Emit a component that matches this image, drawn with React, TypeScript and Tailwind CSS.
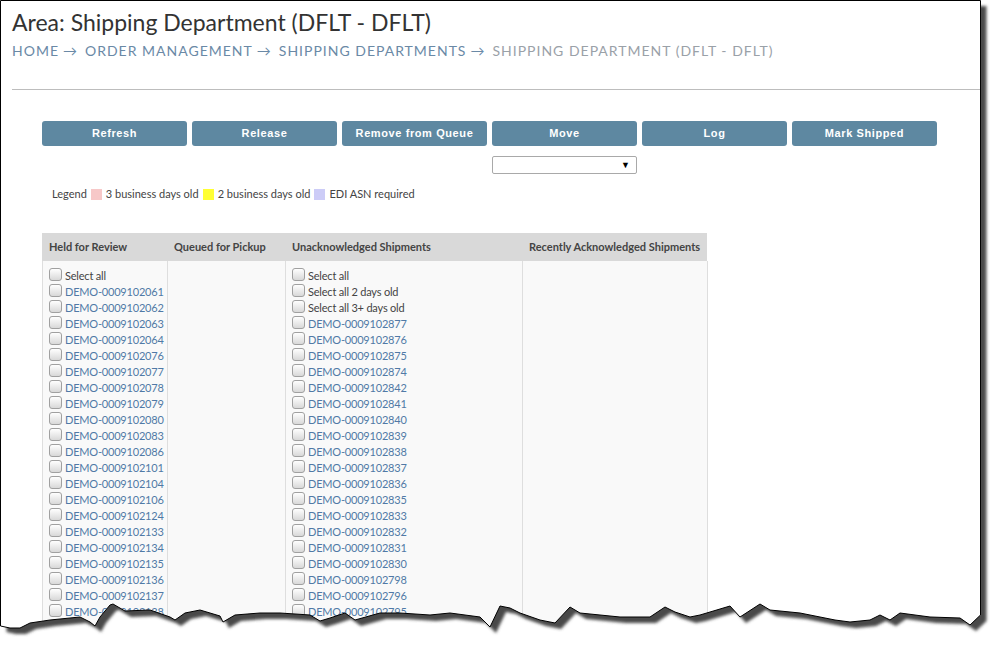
import React from "react";

const held = [
  "0009102061","0009102062","0009102063","0009102064","0009102076","0009102077","0009102078","0009102079","0009102080","0009102083","0009102086","0009102101","0009102104","0009102106","0009102124","0009102133","0009102134","0009102135","0009102136","0009102137","0009102138",
];
const unack = [
  "0009102877","0009102876","0009102875","0009102874","0009102842","0009102841","0009102840","0009102839","0009102838","0009102837","0009102836","0009102835","0009102833","0009102832","0009102831","0009102830","0009102798","0009102796","0009102795",
];

const torn: [number, number][] = [
  [0.5,626],[10,628],[20,628],[30,623],[50,620],[80,617],[90,622],[95,626],[100,617],[110,605],[113,604],[125,611],[150,610],[170,617],[175,620],[185,613],[200,610],[220,616],[223,622],[235,615],[260,613],[280,613],[310,615],[320,621],[330,618],[345,613],[355,620],[380,613],[400,613],[430,615],[450,613],[480,617],[490,627],[500,606],[510,608],[520,613],[540,620],[555,623],[570,607],[580,613],[620,617],[650,617],[665,607],[675,612],[690,617],[700,615],[730,606],[740,617],[760,604],[770,610],[800,613],[835,620],[850,622],[870,620],[880,615],[890,620],[900,613],[930,617],[960,618],[970,625],[980.5,615],
];

const paperPts = ["0.5,0.5", "980.5,0.5", ...torn.slice().reverse().map(([x, y]) => `${x},${y}`)].join(" ");
const outsidePts = ["981,0", "996,0", "996,650", "0,650", ...torn.map(([x, y]) => `${x},${y}`)].join(" ");
const shadowPts = ["6,6", "986.5,6", ...torn.slice().reverse().map(([x, y]) => `${x + 6},${y + 6}`)].join(" ");

function Box() {
  return (
    <span className="inline-block w-[13px] h-[13px] rounded-[3px] border border-[#a0a0a0] bg-linear-to-b from-[#ffffff] to-[#d8d8d8] mr-[3px] shrink-0 relative top-[-2px]" />
  );
}

function Row({ label, link }: { label: string; link?: boolean }) {
  return (
    <div className="flex items-center h-[16px] leading-[16px] whitespace-nowrap">
      <Box />
      <span className={link ? "text-[#5079a6]" : "text-[#444]"}>{label}</span>
    </div>
  );
}

const btns = ["Refresh", "Release", "Remove from Queue", "Move", "Log", "Mark Shipped"];

export default function App() {
  return (
    <div className="relative w-[996px] h-[650px] overflow-hidden bg-white" style={{ fontFamily: "Lato, 'Open Sans', sans-serif" }}>
      <div className="w-[981px] pl-[12px]">
        <h1 className="text-[23px] leading-[30px] text-[#333] pt-[7px] font-normal whitespace-nowrap">Area: Shipping Department (DFLT - DFLT)</h1>
        <div className="text-[14px] leading-[20px] tracking-[1px] mt-[4px] flex whitespace-nowrap">
          <span className="text-[#6a89a6]">HOME</span>
          <span className="text-[#6a89a6] mx-[4px] tracking-normal">→</span>
          <span className="text-[#6a89a6] ml-[4px]">ORDER MANAGEMENT</span>
          <span className="text-[#6a89a6] mx-[4px] tracking-normal">→</span>
          <span className="text-[#6a89a6] ml-[4px]">SHIPPING DEPARTMENTS</span>
          <span className="text-[#6a89a6] mx-[4px] tracking-normal">→</span>
          <span className="text-[#9aa1a8] ml-[4px]">SHIPPING DEPARTMENT (DFLT - DFLT)</span>
        </div>
        <div className="h-px bg-[#bdbdbd] mt-[28px]" />
        <div className="pl-[30px] pt-[31px]">
          <div className="flex gap-[5px]">
            {btns.map((b) => (
              <div key={b} className="w-[145px] h-[25px] rounded-[3px] bg-[#5e88a1] text-white flex items-center justify-center text-[11px] font-bold tracking-[0.6px]" style={{ fontFamily: "'Liberation Sans', Arial, sans-serif" }}>
                {b}
              </div>
            ))}
          </div>
          <div className="flex mt-[10px]">
            <div className="ml-[450px] w-[145px] h-[18px] border border-[#a9a9a9] rounded-[2px] flex items-center justify-end pr-[6px] text-[9px] text-black">▼</div>
          </div>
          <div className="flex items-center mt-[12px] ml-[10px] text-[11px] text-[#444] h-[16px] whitespace-nowrap">
            <span>Legend</span>
            <span className="inline-block w-[11px] h-[11px] bg-[#f7c8c8] ml-[4px] mr-[4px]" />
            <span>3 business days old</span>
            <span className="inline-block w-[11px] h-[11px] bg-[#ffff33] ml-[4px] mr-[4px]" />
            <span>2 business days old</span>
            <span className="inline-block w-[11px] h-[11px] bg-[#ccccf7] ml-[4px] mr-[4px]" />
            <span>EDI ASN required</span>
          </div>
          <div className="mt-[31px] w-[665px] text-[11px] tracking-[-0.2px]">
            <div className="grid grid-cols-[125px_118px_237px_185px] bg-[#d9d9d9] h-[28px] items-center font-bold text-[#444] whitespace-nowrap tracking-normal">
              <div className="pl-[7px]">Held for Review</div>
              <div className="pl-[7px]">Queued for Pickup</div>
              <div className="pl-[7px]">Unacknowledged Shipments</div>
              <div className="pl-[7px]">Recently Acknowledged Shipments</div>
            </div>
            <div className="grid grid-cols-[125px_118px_237px_185px] bg-[#f9f9f9] border-l border-[#dedede]">
              <div className="pl-[6px] pt-[7px] pb-[20px] border-r border-[#dedede]">
                <Row label="Select all" />
                {held.map((h) => (
                  <Row key={h} label={`DEMO-${h}`} link />
                ))}
              </div>
              <div className="border-r border-[#dedede]" />
              <div className="pl-[6px] pt-[7px] pb-[20px] border-r border-[#dedede]">
                <Row label="Select all" />
                <Row label="Select all 2 days old" />
                <Row label="Select all 3+ days old" />
                {unack.map((h) => (
                  <Row key={h} label={`DEMO-${h}`} link />
                ))}
              </div>
              <div className="border-r border-[#dedede]" />
            </div>
          </div>
        </div>
      </div>
      <svg className="absolute inset-0 pointer-events-none" width="996" height="650" viewBox="0 0 996 650">
        <defs>
          <clipPath id="outside">
            <polygon points={outsidePts} />
          </clipPath>
          <filter id="blur" x="-5%" y="-5%" width="110%" height="110%">
            <feGaussianBlur stdDeviation="1.6" />
          </filter>
        </defs>
        <polygon points={outsidePts} fill="#ffffff" />
        <g clipPath="url(#outside)">
          <polygon points={shadowPts} fill="#4a4a4a" filter="url(#blur)" />
        </g>
        <polygon points={paperPts} fill="none" stroke="#000" strokeWidth="1" />
      </svg>
    </div>
  );
}
